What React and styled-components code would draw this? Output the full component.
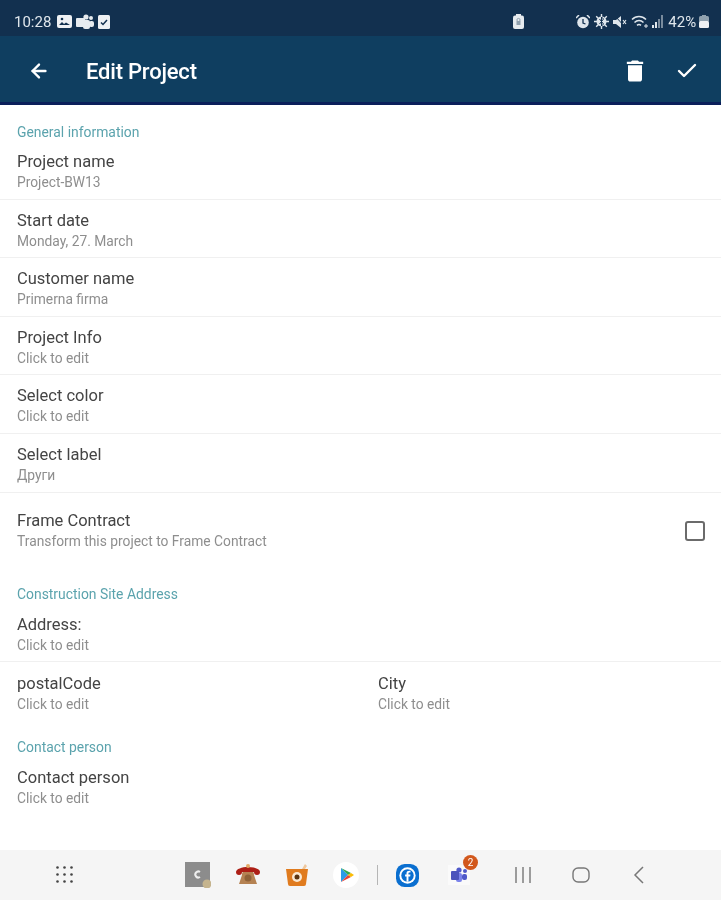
import React from "react";
import styled, { createGlobalStyle } from "styled-components";
import { FiArrowLeft, FiCheck } from "react-icons/fi";
import { MdDelete } from "react-icons/md";

const GlobalStyle = createGlobalStyle`
  html, body { margin: 0; padding: 0; background: #fff; }
  body { font-family: Roboto, "Liberation Sans", sans-serif; }
  * { box-sizing: border-box; }
`;

const Page = styled.div`
  width: 721px;
  height: 900px;
  display: flex;
  flex-direction: column;
  overflow: hidden;
  filter: blur(0.35px);
`;

const StatusBar = styled.div`
  height: 36px;
  background: #12304f;
  color: #dfe6ec;
  display: flex;
  align-items: center;
  padding: 7px 8px 0 14px;
  font-size: 15px;
  flex-shrink: 0;
`;

const StatusGroup = styled.div`
  display: flex;
  align-items: center;
  gap: ${(p) => p.$gap || 4}px;
  margin-left: ${(p) => p.$left || 0}px;
`;

const Clock = styled.span`
  margin-right: 2px;
`;

const Toolbar = styled.div`
  height: 69px;
  background: #0f3e60;
  border-bottom: 3px solid #0b1f5a;
  display: flex;
  align-items: center;
  padding: 4px 22px 0 28px;
  color: #fff;
  flex-shrink: 0;
`;

const Title = styled.div`
  font-size: 22px;
  font-weight: 500;
  margin-left: 36px;
  flex: 1;
  letter-spacing: -0.2px;
`;

const ToolIcons = styled.div`
  display: flex;
  align-items: center;
  gap: 26px;
`;

const Content = styled.div`
  flex: 1;
  background: #fff;
`;

const SectionTitle = styled.div`
  font-size: 13.9px;
  color: #5ba3ad;
  padding: 0 0 1px 17px;
  height: ${(p) => p.$height}px;
  display: flex;
  align-items: flex-end;
  line-height: 16px;
`;

const Row = styled.div`
  height: ${(p) => p.$height || 58.6}px;
  padding: ${(p) => p.$top ?? 11}px 16px 0 17px;
  border-bottom: ${(p) => (p.$plain ? "none" : "1px solid #f0f0f0")};
  display: flex;
  align-items: ${(p) => (p.$center ? "center" : "flex-start")};
  justify-content: space-between;
`;

const Column = styled.div`
  width: ${(p) => p.$width || "auto"};
`;

const Label = styled.div`
  font-size: 16.5px;
  line-height: 20px;
  color: #444;
`;

const Sub = styled.div`
  font-size: 13.8px;
  line-height: 20px;
  color: #8e8e8e;
`;

const Check = styled.div`
  width: 20px;
  height: 20px;
  border: 2px solid #6b6b6b;
  border-radius: 3px;
`;

const NavBar = styled.div`
  height: 50px;
  background: #f5f5f5;
  display: flex;
  align-items: center;
  padding-left: 55px;
  flex-shrink: 0;
`;

const Slot = styled.div`
  position: relative;
  width: ${(p) => p.$size || 26}px;
  height: 26px;
  margin-left: ${(p) => p.$left || 0}px;
  display: flex;
  align-items: center;
  justify-content: center;
`;

const Divider = styled.div`
  width: 1px;
  height: 20px;
  background: #b5b5b5;
  margin-left: ${(p) => p.$left}px;
`;

const Badge = styled.div`
  position: absolute;
  top: -7px;
  right: -6px;
  width: 15px;
  height: 15px;
  border-radius: 50%;
  background: #d2581c;
  color: #fff;
  font-size: 10px;
  line-height: 15px;
  text-align: center;
`;

const Dots = () => (
  <svg width="20" height="20" viewBox="0 0 20 20" fill="#444">
    {[2, 9, 16].flatMap((y) =>
      [2, 9, 16].map((x) => <circle key={`${x}-${y}`} cx={x + 0.5} cy={y + 0.5} r="1.3" />)
    )}
  </svg>
);

const PhotoIcon = () => (
  <svg width="15" height="13" viewBox="0 0 15 13">
    <rect width="15" height="13" rx="2" fill="#eef1f4" />
    <path d="M2 10l3-3 2 2 2-1.5 4 2.5z" fill="#12304f" />
    <circle cx="5" cy="4" r="1.3" fill="#12304f" />
  </svg>
);

const TeamsMono = () => (
  <svg width="18" height="16" viewBox="0 0 18 16" fill="#e6ebef">
    <circle cx="10" cy="3" r="2.6" />
    <circle cx="15" cy="4" r="2" />
    <rect x="7" y="6" width="7" height="9" rx="2" />
    <rect x="13" y="7" width="5" height="6" rx="2" />
    <rect x="0" y="4" width="9" height="9" rx="1" />
  </svg>
);

const CheckNote = () => (
  <svg width="12" height="14" viewBox="0 0 12 14">
    <rect width="12" height="14" rx="1.5" fill="#eef1f4" />
    <path d="M3 7.5l2 2 4-4.5" stroke="#12304f" strokeWidth="1.5" fill="none" />
  </svg>
);

const LockBattery = () => (
  <svg width="11" height="15" viewBox="0 0 11 15">
    <rect x="3" y="0" width="5" height="2" fill="#e6ebef" />
    <rect y="1.5" width="11" height="13.5" rx="2" fill="#e6ebef" />
    <rect x="3.5" y="7" width="4" height="4" fill="#8fa0ae" />
    <circle cx="5.5" cy="6" r="1.6" fill="none" stroke="#8fa0ae" />
  </svg>
);

const Alarm = () => (
  <svg width="14" height="14" viewBox="0 0 14 14">
    <circle cx="7" cy="7.5" r="5.8" fill="#dfe6ec" />
    <path d="M7 4v4l2.5 1" stroke="#12304f" strokeWidth="1.3" fill="none" />
    <path d="M0 3l3-3M14 3l-3-3" stroke="#dfe6ec" strokeWidth="1.5" />
  </svg>
);

const Bluetooth = () => (
  <svg width="15" height="15" viewBox="0 0 15 15">
    <circle cx="7.5" cy="7.5" r="5" fill="#dfe6ec" />
    <path d="M7.5 0v15M0 7.5h15M2.2 2.2l10.6 10.6M12.8 2.2L2.2 12.8" stroke="#dfe6ec" strokeWidth="1.4" />
    <path d="M5.5 5l4 5-2 2V3l2 2-4 5" stroke="#12304f" strokeWidth="1" fill="none" />
  </svg>
);

const Mute = () => (
  <svg width="14" height="14" viewBox="0 0 14 14">
    <path d="M0 5h3l5-4v12l-5-4H0z" fill="#dfe6ec" />
    <path d="M2 1l11 12" stroke="#12304f" strokeWidth="1" />
    <path d="M10 5l3 4M13 5l-3 4" stroke="#dfe6ec" strokeWidth="1.2" />
  </svg>
);

const Wifi = () => (
  <svg width="17" height="14" viewBox="0 0 17 14" fill="none" stroke="#dfe6ec" strokeWidth="1.5">
    <path d="M1 4.5c4-4 10-4 14 0M3.5 7.5c2.6-2.6 6.4-2.6 9 0M6 10.3c1.2-1 2.8-1 4 0" />
    <path d="M13 11h4M15 9v4" strokeWidth="1" />
  </svg>
);

const Signal = () => (
  <svg width="12" height="13" viewBox="0 0 12 13" fill="#dfe6ec">
    <rect x="0" y="10" width="2" height="3" />
    <rect x="3" y="7" width="2" height="6" />
    <rect x="6" y="4" width="2" height="9" opacity="0.5" />
    <rect x="9" y="0" width="2" height="13" opacity="0.5" />
  </svg>
);

const Battery = () => (
  <svg width="10" height="13" viewBox="0 0 10 13">
    <rect x="3" y="0" width="4" height="1.5" fill="#8fa0ae" />
    <rect y="1" width="10" height="6" rx="1.5" fill="#8fa0ae" />
    <rect y="6" width="10" height="7" rx="1.5" fill="#eef1f4" />
  </svg>
);

const CAppIcon = () => (
  <svg width="26" height="26" viewBox="0 0 26 26">
    <rect width="25" height="25" fill="#8c8c8c" />
    <path d="M15 10a3 3 0 1 0 0 5" stroke="#eee" strokeWidth="2" fill="none" />
    <circle cx="22" cy="22" r="4.5" fill="#c5b48e" />
  </svg>
);

const PhoneApp = () => (
  <svg width="26" height="24" viewBox="0 0 26 24">
    <path d="M7 12c0-4 3-6 6-6s6 2 6 6l3 9H4z" fill="#b58252" />
    <circle cx="13" cy="15" r="3.5" fill="#8f6238" />
    <path d="M1 9c0-3 6-5 12-5s12 2 12 5c0 2-1 3-3 3-2 0-3-1-3-3H7c0 2-1 3-3 3-2 0-3-1-3-3z" fill="#ad1f16" />
    <circle cx="13" cy="3" r="2" fill="#e3a866" />
  </svg>
);

const CameraApp = () => (
  <svg width="24" height="24" viewBox="0 0 24 24">
    <path d="M1 6h22l-2 15a2 2 0 0 1-2 2H5a2 2 0 0 1-2-2z" fill="#e07b1e" />
    <circle cx="12" cy="14" r="5" fill="#fbe9d2" />
    <circle cx="12" cy="14" r="2.5" fill="#5a3310" />
    <path d="M17 6l3-5 2 2-2 3z" fill="#efc79c" />
  </svg>
);

const PlayApp = () => (
  <svg width="26" height="26" viewBox="0 0 26 26">
    <circle cx="13" cy="13" r="13" fill="#fff" />
    <path d="M8 6l7 7-7 7z" fill="#2b9be8" />
    <path d="M8 6l10 5-3 2z" fill="#34a853" />
    <path d="M8 20l10-5-3-2z" fill="#ea4335" />
    <path d="M18 11l3 2-3 2-3-2z" fill="#fbbc04" />
  </svg>
);

const FbApp = () => (
  <svg width="23" height="23" viewBox="0 0 24 24">
    <rect width="24" height="24" rx="9" fill="#0a6fd0" />
    <circle cx="12" cy="12" r="8.500" fill="#fff" />
    <circle cx="12" cy="12" r="6.500" fill="#0a6fd0" />
    <path d="M13 18.500V13h1.800l.3-2H13V9.800c0-.6.3-1 1.100-1h1V7.100c-2.300-.4-4.100.4-4.100 2.400V11H9.500v2H11v5.500z" fill="#fff" />
  </svg>
);

const TeamsApp = () => (
  <svg width="22" height="20" viewBox="0 0 22 20">
    <rect x="0" y="0" width="22" height="20" fill="#fafafa" />
    <circle cx="11" cy="5" r="2.600" fill="#5059c9" />
    <circle cx="17" cy="6" r="2" fill="#5059c9" />
    <rect x="8" y="8" width="6" height="9" rx="2" fill="#7b83eb" />
    <rect x="14" y="9" width="5" height="6" rx="2" fill="#5059c9" />
    <rect x="3" y="6" width="8" height="9" rx="1" fill="#4b53bc" />
  </svg>
);

const Bars = () => (
  <svg width="18" height="16" viewBox="0 0 18 16" stroke="#777" strokeWidth="1.4">
    <path d="M2 0v16M9 0v16M16 0v16" />
  </svg>
);

const Home = () => (
  <svg width="18" height="16" viewBox="0 0 18 16" fill="none" stroke="#777" strokeWidth="1.4">
    <rect x="1" y="1" width="16" height="14" rx="5" />
  </svg>
);

const Back = () => (
  <svg width="11" height="18" viewBox="0 0 11 18" fill="none" stroke="#777" strokeWidth="1.5">
    <path d="M10 1L2 9l8 8" />
  </svg>
);

const generalRows = [
  ["Project name", "Project-BW13"],
  ["Start date", "Monday, 27. March"],
  ["Customer name", "Primerna firma"],
  ["Project Info", "Click to edit"],
  ["Select color", "Click to edit"],
  ["Select label", "Други"],
];

const App = () => {
  return (
    <Page>
      <GlobalStyle />
      <StatusBar>
        <StatusGroup>
          <Clock>10:28</Clock>
          <PhotoIcon />
          <TeamsMono />
          <CheckNote />
        </StatusGroup>
        <StatusGroup $left={403}>
          <LockBattery />
        </StatusGroup>
        <StatusGroup $left={52}>
          <Alarm />
          <Bluetooth />
          <Mute />
          <Wifi />
          <Signal />
        </StatusGroup>
        <StatusGroup $left={4} $gap={3}>
          <span>42%</span>
          <Battery />
        </StatusGroup>
      </StatusBar>

      <Toolbar>
        <FiArrowLeft size={22} strokeWidth={2.6} />
        <Title>Edit Project</Title>
        <ToolIcons>
          <MdDelete size={28} />
          <FiCheck size={24} strokeWidth={2.4} />
        </ToolIcons>
      </Toolbar>

      <Content>
        <SectionTitle $height={36}>General information</SectionTitle>
        {generalRows.map(([label, sub]) => (
          <Row key={label}>
            <Column>
              <Label>{label}</Label>
              <Sub>{sub}</Sub>
            </Column>
          </Row>
        ))}
        <Row $height={77} $top={0} $plain $center>
          <Column>
            <Label>Frame Contract</Label>
            <Sub>Transform this project to Frame Contract</Sub>
          </Column>
          <Check />
        </Row>
        <SectionTitle $height={33}>Construction Site Address</SectionTitle>
        <Row $height={59} $top={12}>
          <Column>
            <Label>Address:</Label>
            <Sub>Click to edit</Sub>
          </Column>
        </Row>
        <Row $height={62} $top={12} $plain>
          <Column $width="361px">
            <Label>postalCode</Label>
            <Sub>Click to edit</Sub>
          </Column>
          <Column $width="327px">
            <Label>City</Label>
            <Sub>Click to edit</Sub>
          </Column>
        </Row>
        <SectionTitle $height={32}>Contact person</SectionTitle>
        <Row $top={12} $plain>
          <Column>
            <Label>Contact person</Label>
            <Sub>Click to edit</Sub>
          </Column>
        </Row>
      </Content>

      <NavBar>
        <Slot $size={20}><Dots /></Slot>
        <Slot $left={110}><CAppIcon /></Slot>
        <Slot $left={24}><PhoneApp /></Slot>
        <Slot $left={23}><CameraApp /></Slot>
        <Slot $left={23}><PlayApp /></Slot>
        <Divider $left={18} />
        <Slot $left={16}><FbApp /></Slot>
        <Slot $left={26}>
          <TeamsApp />
          <Badge>2</Badge>
        </Slot>
        <Slot $left={38}><Bars /></Slot>
        <Slot $left={32}><Home /></Slot>
        <Slot $left={31}><Back /></Slot>
      </NavBar>
    </Page>
  );
};

export default App;
